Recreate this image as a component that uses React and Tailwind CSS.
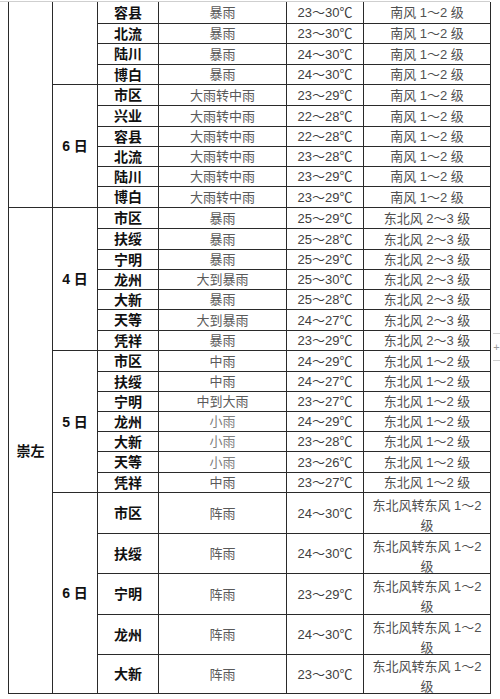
import React from "react";

const groups = [
  {
    region: "",
    days: [
      {
        date: "",
        rows: [
          ["容县", "暴雨", "23～30℃", "南风 1～2 级"],
          ["北流", "暴雨", "23～30℃", "南风 1～2 级"],
          ["陆川", "暴雨", "24～30℃", "南风 1～2 级"],
          ["博白", "暴雨", "24～30℃", "南风 1～2 级"],
        ],
      },
      {
        date: "6 日",
        rows: [
          ["市区", "大雨转中雨", "23～29℃", "南风 1～2 级"],
          ["兴业", "大雨转中雨", "22～28℃", "南风 1～2 级"],
          ["容县", "大雨转中雨", "22～28℃", "南风 1～2 级"],
          ["北流", "大雨转中雨", "23～28℃", "南风 1～2 级"],
          ["陆川", "大雨转中雨", "23～29℃", "南风 1～2 级"],
          ["博白", "大雨转中雨", "23～29℃", "南风 1～2 级"],
        ],
      },
    ],
  },
  {
    region: "崇左",
    days: [
      {
        date: "4 日",
        rows: [
          ["市区", "暴雨", "25～29℃", "东北风 2～3 级"],
          ["扶绥", "暴雨", "25～28℃", "东北风 2～3 级"],
          ["宁明", "暴雨", "25～29℃", "东北风 2～3 级"],
          ["龙州", "大到暴雨", "25～30℃", "东北风 2～3 级"],
          ["大新", "暴雨", "25～28℃", "东北风 2～3 级"],
          ["天等", "大到暴雨", "24～27℃", "东北风 2～3 级"],
          ["凭祥", "暴雨", "23～29℃", "东北风 2～3 级"],
        ],
      },
      {
        date: "5 日",
        rows: [
          ["市区", "中雨", "24～29℃", "东北风 1～2 级"],
          ["扶绥", "中雨", "24～27℃", "东北风 1～2 级"],
          ["宁明", "中到大雨", "23～27℃", "东北风 1～2 级"],
          ["龙州", "小雨", "24～29℃", "东北风 1～2 级"],
          ["大新", "小雨", "23～28℃", "东北风 1～2 级"],
          ["天等", "小雨", "23～26℃", "东北风 1～2 级"],
          ["凭祥", "中雨", "23～27℃", "东北风 1～2 级"],
        ],
      },
      {
        date: "6 日",
        rows: [
          ["市区", "阵雨", "24～30℃", "东北风转东风 1～2|级"],
          ["扶绥", "阵雨", "24～30℃", "东北风转东风 1～2|级"],
          ["宁明", "阵雨", "23～29℃", "东北风转东风 1～2|级"],
          ["龙州", "阵雨", "24～30℃", "东北风转东风 1～2|级"],
          ["大新", "阵雨", "23～30℃", "东北风转东风 1～2|级"],
        ],
      },
    ],
  },
];

const spanClass = {
  4: "row-span-4",
  5: "row-span-5",
  6: "row-span-6",
  7: "row-span-7",
  10: "row-span-10",
  19: "row-span-19",
};

const cell =
  "border-r border-b border-[#2a2a2a] flex items-center justify-center text-center";

function Wind({ text }) {
  const parts = text.split("|");
  if (parts.length === 1) return <span>{text}</span>;
  return (
    <span className="leading-[20px] pt-[6px]">
      {parts[0]}
      <br />
      {parts[1]}
    </span>
  );
}

export default function App() {
  const cells = [];
  groups.forEach((g, gi) => {
    const total = g.days.reduce((s, d) => s + d.rows.length, 0);
    cells.push(
      <div
        key={`r${gi}`}
        className={`${cell} col-start-1 ${spanClass[total]} font-bold text-[14px] text-[#111]`}
      >
        {g.region}
      </div>
    );
    g.days.forEach((d, di) => {
      cells.push(
        <div
          key={`d${gi}-${di}`}
          className={`${cell} col-start-2 ${spanClass[d.rows.length]} font-bold text-[14px] text-[#111]`}
        >
          {d.date}
        </div>
      );
      d.rows.forEach((r, ri) => {
        const k = `${gi}-${di}-${ri}`;
        cells.push(
          <div key={`a${k}`} className={`${cell} col-start-3 font-bold text-[14px] text-[#111]`}>
            {r[0]}
          </div>,
          <div
            key={`b${k}`}
            className={`${cell} col-start-4 text-[13px] ${r[1] === "小雨" ? "text-[#808080]" : "text-[#5a5a5a]"}`}
          >
            {r[1]}
          </div>,
          <div key={`c${k}`} className={`${cell} col-start-5 text-[13px] text-[#404040]`}>
            {r[2]}
          </div>,
          <div key={`e${k}`} className={`${cell} col-start-6 text-[13px] text-[#505050]`}>
            <Wind text={r[3]} />
          </div>
        );
      });
    });
  });

  return (
    <div className="relative w-[500px] h-[699px] bg-white overflow-hidden font-['Liberation_Sans','Noto_Sans_CJK_SC',sans-serif] leading-none">
      <div className="h-[2px] w-[490px] border-b border-[#cfcfcf]" />
      <div className="ml-[8px] w-fit border-l border-[#2a2a2a] grid grid-cols-[44px_45px_61px_128px_77px_127px] grid-rows-[22px_20px_21px_20px_21px_21px_20px_20px_20px_21px_21px_21px_20px_20px_20px_21px_20px_21px_20px_20px_20px_20px_21px_20px_41px_40px_41px_40px_39px]">
        {cells}
      </div>
      <div className="absolute left-[493px] top-[333px] w-[7px] h-[28px] border-t border-b border-[#d0d0d0] flex items-center justify-center text-[11px] text-[#999]">
        +
      </div>
    </div>
  );
}
